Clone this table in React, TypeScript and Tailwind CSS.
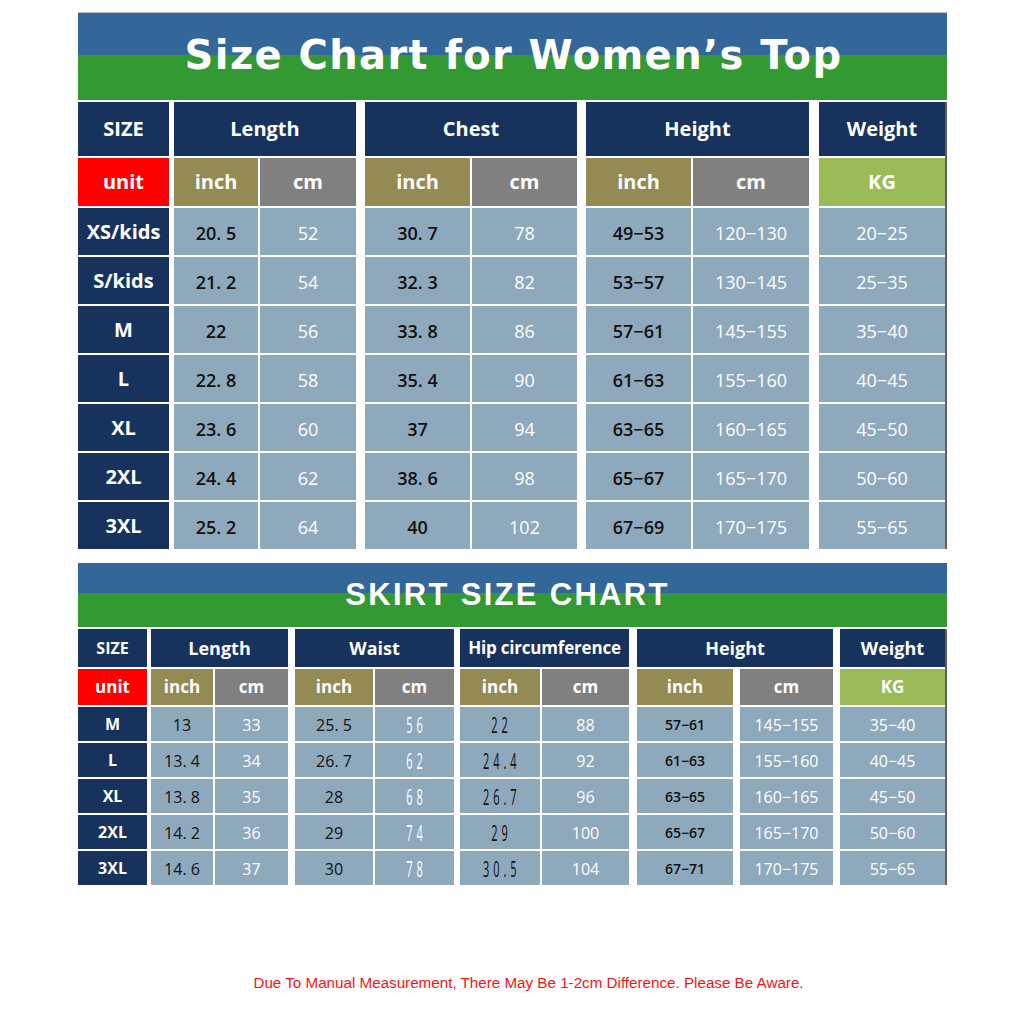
import React from "react";

type Col = {
  unit: string;
  unitBg: string;
  cell: string;
  vals: string[];
  narrow?: boolean;
};

type Group = {
  title: string;
  titleCls?: string;
  grid: string;
  className?: string;
  cols: Col[];
};

type Table = {
  rows: string;
  headText: string;
  unitText: string;
  groups: Group[];
};

const navy = "bg-[#17325c]";
const red = "bg-[#ff0000]";
const olive = "bg-[#948a54]";
const gray = "bg-[#808080]";
const kg = "bg-[#9bbb59]";
const cellBg = "bg-[#8ea9bc]";

const topBlack = `${cellBg} pt-[3px] text-[#111] text-[18px] font-semibold`;
const topWhite = `${cellBg} pt-[3px] text-white text-[18px]`;
const skBlack = `${cellBg} pt-[1px] text-[#111] text-[16px] font-medium`;
const skWhite = `${cellBg} pt-[1px] text-white text-[16px]`;

const top: Table = {
  rows: "grid-rows-[54px_48px_repeat(7,47px)]",
  headText: "text-[20px]",
  unitText: "text-[20px]",
  groups: [
    {
      title: "SIZE",
      grid: "grid-cols-[91px]",
      cols: [
        {
          unit: "unit",
          unitBg: red,
          cell: `${navy} text-white text-[20px] font-bold`,
          vals: ["XS/kids", "S/kids", "M", "L", "XL", "2XL", "3XL"],
        },
      ],
    },
    {
      title: "Length",
      grid: "grid-cols-[84px_96px] gap-x-[2px]",
      className: "ml-[5px]",
      cols: [
        { unit: "inch", unitBg: olive, cell: topBlack, vals: ["20. 5", "21. 2", "22", "22. 8", "23. 6", "24. 4", "25. 2"] },
        { unit: "cm", unitBg: gray, cell: topWhite, vals: ["52", "54", "56", "58", "60", "62", "64"] },
      ],
    },
    {
      title: "Chest",
      grid: "grid-cols-[105px_105px] gap-x-[2px]",
      className: "ml-[9px]",
      cols: [
        { unit: "inch", unitBg: olive, cell: topBlack, vals: ["30. 7", "32. 3", "33. 8", "35. 4", "37", "38. 6", "40"] },
        { unit: "cm", unitBg: gray, cell: topWhite, vals: ["78", "82", "86", "90", "94", "98", "102"] },
      ],
    },
    {
      title: "Height",
      grid: "grid-cols-[105px_116px] gap-x-[2px]",
      className: "ml-[9px]",
      cols: [
        { unit: "inch", unitBg: olive, cell: topBlack, vals: ["49−53", "53−57", "57−61", "61−63", "63−65", "65−67", "67−69"] },
        { unit: "cm", unitBg: gray, cell: topWhite, vals: ["120−130", "130−145", "145−155", "155−160", "160−165", "165−170", "170−175"] },
      ],
    },
    {
      title: "Weight",
      grid: "grid-cols-[126px]",
      className: "ml-[10px] border-r-2 border-[#5e5e5e]",
      cols: [
        { unit: "KG", unitBg: kg, cell: topWhite, vals: ["20−25", "25−35", "35−40", "40−45", "45−50", "50−60", "55−65"] },
      ],
    },
  ],
};

const skirt: Table = {
  rows: "grid-rows-[38px_36px_repeat(5,34px)]",
  headText: "text-[18px]",
  unitText: "text-[17px]",
  groups: [
    {
      title: "SIZE",
      titleCls: "text-[16px]",
      grid: "grid-cols-[69px]",
      cols: [
        {
          unit: "unit",
          unitBg: red,
          cell: `${navy} text-white text-[16px] font-bold`,
          vals: ["M", "L", "XL", "2XL", "3XL"],
        },
      ],
    },
    {
      title: "Length",
      grid: "grid-cols-[62px_73px] gap-x-[2px]",
      className: "ml-[4px]",
      cols: [
        { unit: "inch", unitBg: olive, cell: skBlack, vals: ["13", "13. 4", "13. 8", "14. 2", "14. 6"] },
        { unit: "cm", unitBg: gray, cell: skWhite, vals: ["33", "34", "35", "36", "37"] },
      ],
    },
    {
      title: "Waist",
      grid: "grid-cols-[78px_79px] gap-x-[2px]",
      className: "ml-[7px]",
      cols: [
        { unit: "inch", unitBg: olive, cell: skBlack, vals: ["25. 5", "26. 7", "28", "29", "30"] },
        { unit: "cm", unitBg: gray, cell: `${cellBg} text-white`, vals: ["56", "62", "68", "74", "78"], narrow: true },
      ],
    },
    {
      title: "Hip circumference",
      titleCls: "text-[17px] tracking-[-0.2px]",
      grid: "grid-cols-[80px_87px] gap-x-[2px]",
      className: "ml-[6px]",
      cols: [
        { unit: "inch", unitBg: olive, cell: `${cellBg} text-[#111]`, vals: ["22", "24.4", "26.7", "29", "30.5"], narrow: true },
        { unit: "cm", unitBg: gray, cell: skWhite, vals: ["88", "92", "96", "100", "104"] },
      ],
    },
    {
      title: "Height",
      grid: "grid-cols-[96px_93px] gap-x-[7px]",
      className: "ml-[8px]",
      cols: [
        { unit: "inch", unitBg: olive, cell: `${cellBg} pt-[1px] text-[#111] text-[14px] font-semibold`, vals: ["57−61", "61−63", "63−65", "65−67", "67−71"] },
        { unit: "cm", unitBg: gray, cell: skWhite, vals: ["145−155", "155−160", "160−165", "165−170", "170−175"] },
      ],
    },
    {
      title: "Weight",
      grid: "grid-cols-[105px]",
      className: "ml-[7px] border-r-2 border-[#5e5e5e]",
      cols: [
        { unit: "KG", unitBg: kg, cell: skWhite, vals: ["35−40", "40−45", "45−50", "50−60", "55−65"] },
      ],
    },
  ],
};

function SizeTable({ t }: { t: Table }) {
  return (
    <div className="flex">
      {t.groups.map((g) => {
        const n = g.cols[0].vals.length;
        return (
          <div key={g.title} className={`grid gap-y-[2px] ${t.rows} ${g.grid} ${g.className ?? ""}`}>
            <div
              className={`col-span-full flex items-center justify-center ${navy} font-bold text-white ${g.titleCls ?? t.headText}`}
            >
              {g.title}
            </div>
            {g.cols.map((c, i) => (
              <div
                key={"u" + i}
                className={`flex items-center justify-center font-bold text-white ${c.unitBg} ${t.unitText}`}
              >
                {c.unit}
              </div>
            ))}
            {Array.from({ length: n }).map((_, r) =>
              g.cols.map((c, i) => (
                <div key={r + "-" + i} className={`flex items-center justify-center ${c.cell}`}>
                  {c.narrow ? (
                    <span className="inline-block scale-x-[0.5] pl-[8px] text-[22px] tracking-[8px]">
                      {c.vals[r]}
                    </span>
                  ) : (
                    c.vals[r]
                  )}
                </div>
              ))
            )}
          </div>
        );
      })}
    </div>
  );
}

export default function App() {
  return (
    <div className="h-[1024px] w-[1024px] bg-white pl-[78px] pt-[12px] font-['Open_Sans',sans-serif]">
      <div className="w-[869px]">
        <div className="flex h-[88px] items-center justify-center border-t border-[#c4c4c4] bg-[linear-gradient(to_bottom,#336699_48%,#339933_48%)] pb-[3px]">
          <h1 className="pl-[2px] font-['DejaVu_Sans',sans-serif] text-[40px] font-bold tracking-[1.4px] text-white">
            Size Chart for Women’s Top
          </h1>
        </div>
        <div className="mt-[2px]">
          <SizeTable t={top} />
        </div>

        <div className="mt-[14px] flex h-[64px] items-center justify-center bg-[linear-gradient(to_bottom,#336699_47%,#339933_47%)] pr-[10px]">
          <h2 className="font-['Liberation_Sans',sans-serif] text-[31px] font-bold tracking-[2.3px] text-white">
            SKIRT SIZE CHART
          </h2>
        </div>
        <div className="mt-[2px]">
          <SizeTable t={skirt} />
        </div>

        <p className="mt-[88px] pl-[32px] text-center font-['Liberation_Sans',sans-serif] text-[15.2px] leading-[20px] text-[#ff1010]">
          Due To Manual Measurement, There May Be 1-2cm Difference. Please Be Aware.
        </p>
      </div>
    </div>
  );
}
